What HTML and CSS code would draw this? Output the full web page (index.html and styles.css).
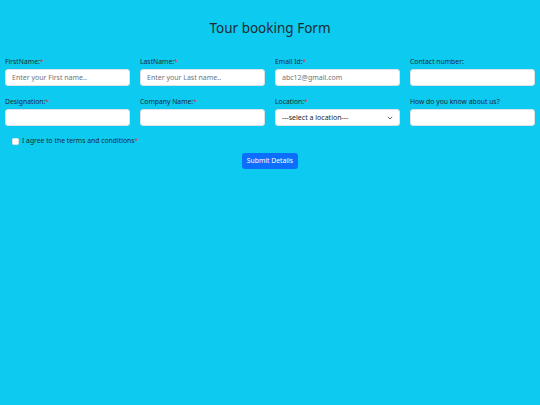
FILE: index.html
```html
<!DOCTYPE html>
<html>
<head>
<meta charset="utf-8">
<link rel="stylesheet" href="styles.css">
</head>
<body>
<h1 class="title">Tour booking Form</h1>
<form class="form">
  <div class="grid">
    <div class="field">
      <label class="label">FirstName:<span class="req">*</span></label>
      <input class="input" type="text" placeholder="Enter your First name..">
    </div>
    <div class="field">
      <label class="label">LastName:<span class="req">*</span></label>
      <input class="input" type="text" placeholder="Enter your Last name..">
    </div>
    <div class="field">
      <label class="label">Email Id:<span class="req">*</span></label>
      <input class="input" type="text" placeholder="abc12@gmail.com">
    </div>
    <div class="field">
      <label class="label">Contact number:</label>
      <input class="input" type="text">
    </div>
    <div class="field">
      <label class="label">Designation:<span class="req">*</span></label>
      <input class="input" type="text">
    </div>
    <div class="field">
      <label class="label">Company Name:<span class="req">*</span></label>
      <input class="input" type="text">
    </div>
    <div class="field">
      <label class="label">Location:<span class="req">*</span></label>
      <div class="select">
        <span class="select-text">---select a location---</span>
        <svg class="chev" width="6" height="4" viewBox="0 0 6 4"><path d="M0.8 0.9 L3 3 L5.2 0.9" fill="none" stroke="#343a40" stroke-width="0.8"/></svg>
      </div>
    </div>
    <div class="field">
      <label class="label">How do you know about us?</label>
      <input class="input" type="text">
    </div>
  </div>
  <div class="check-row">
    <span class="checkbox"></span>
    <span class="check-label">I agree to the terms and conditions<span class="req">*</span></span>
  </div>
  <div class="actions">
    <button class="btn" type="button">Submit Details</button>
  </div>
</form>
</body>
</html>
```
FILE: styles.css
```css
* { box-sizing: border-box; }
html, body { margin: 0; padding: 0; }
body {
  background: #0dcaf0;
  font-family: "Noto Sans", "Open Sans", sans-serif;
  color: #212529;
  width: 540px;
  height: 405px;
}
.title {
  margin: 0;
  padding-top: 17px;
  text-align: center;
  font-size: 13.5px;
  font-weight: 400;
  line-height: 22px;
  color: #1e2b33;
}
.form {
  padding-top: 18px;
}
.grid {
  display: grid;
  grid-template-columns: repeat(4, 1fr);
  row-gap: 11px;
}
.field {
  padding: 0 5px;
  display: flex;
  flex-direction: column;
}
.label {
  font-size: 6.8px;
  line-height: 10px;
  margin-bottom: 2px;
  color: #1b2a33;
}
.req { color: #dc3545; }
.input {
  height: 17px;
  border: 1px solid #dee2e6;
  border-radius: 3px;
  background: #fff;
  padding: 0 6px;
  font-family: inherit;
  font-size: 7px;
  color: #212529;
  outline: none;
}
.input::placeholder { color: #6c757d; }
.select {
  height: 17px;
  border: 1px solid #dee2e6;
  border-radius: 3px;
  background: #fff;
  padding: 0 6px 0 6px;
  display: flex;
  align-items: center;
  justify-content: space-between;
}
.select-text { font-size: 7px; color: #212529; }
.chev { display: block; }
.check-row {
  display: flex;
  align-items: center;
  padding-left: 12px;
  margin-top: 10px;
  height: 10px;
}
.checkbox {
  width: 7px;
  height: 7px;
  background: #fff;
  border-radius: 1.5px;
  border: 1px solid #dee2e6;
  margin-right: 3px;
}
.check-label {
  font-size: 6.8px;
  line-height: 10px;
  color: #1b2a33;
}
.actions {
  display: flex;
  justify-content: center;
  margin-top: 7px;
}
.btn {
  height: 16px;
  padding: 0 5px;
  border: none;
  border-radius: 3px;
  background: #0d6efd;
  color: #fff;
  font-family: inherit;
  font-size: 6.8px;
  line-height: 16px;
}
```
